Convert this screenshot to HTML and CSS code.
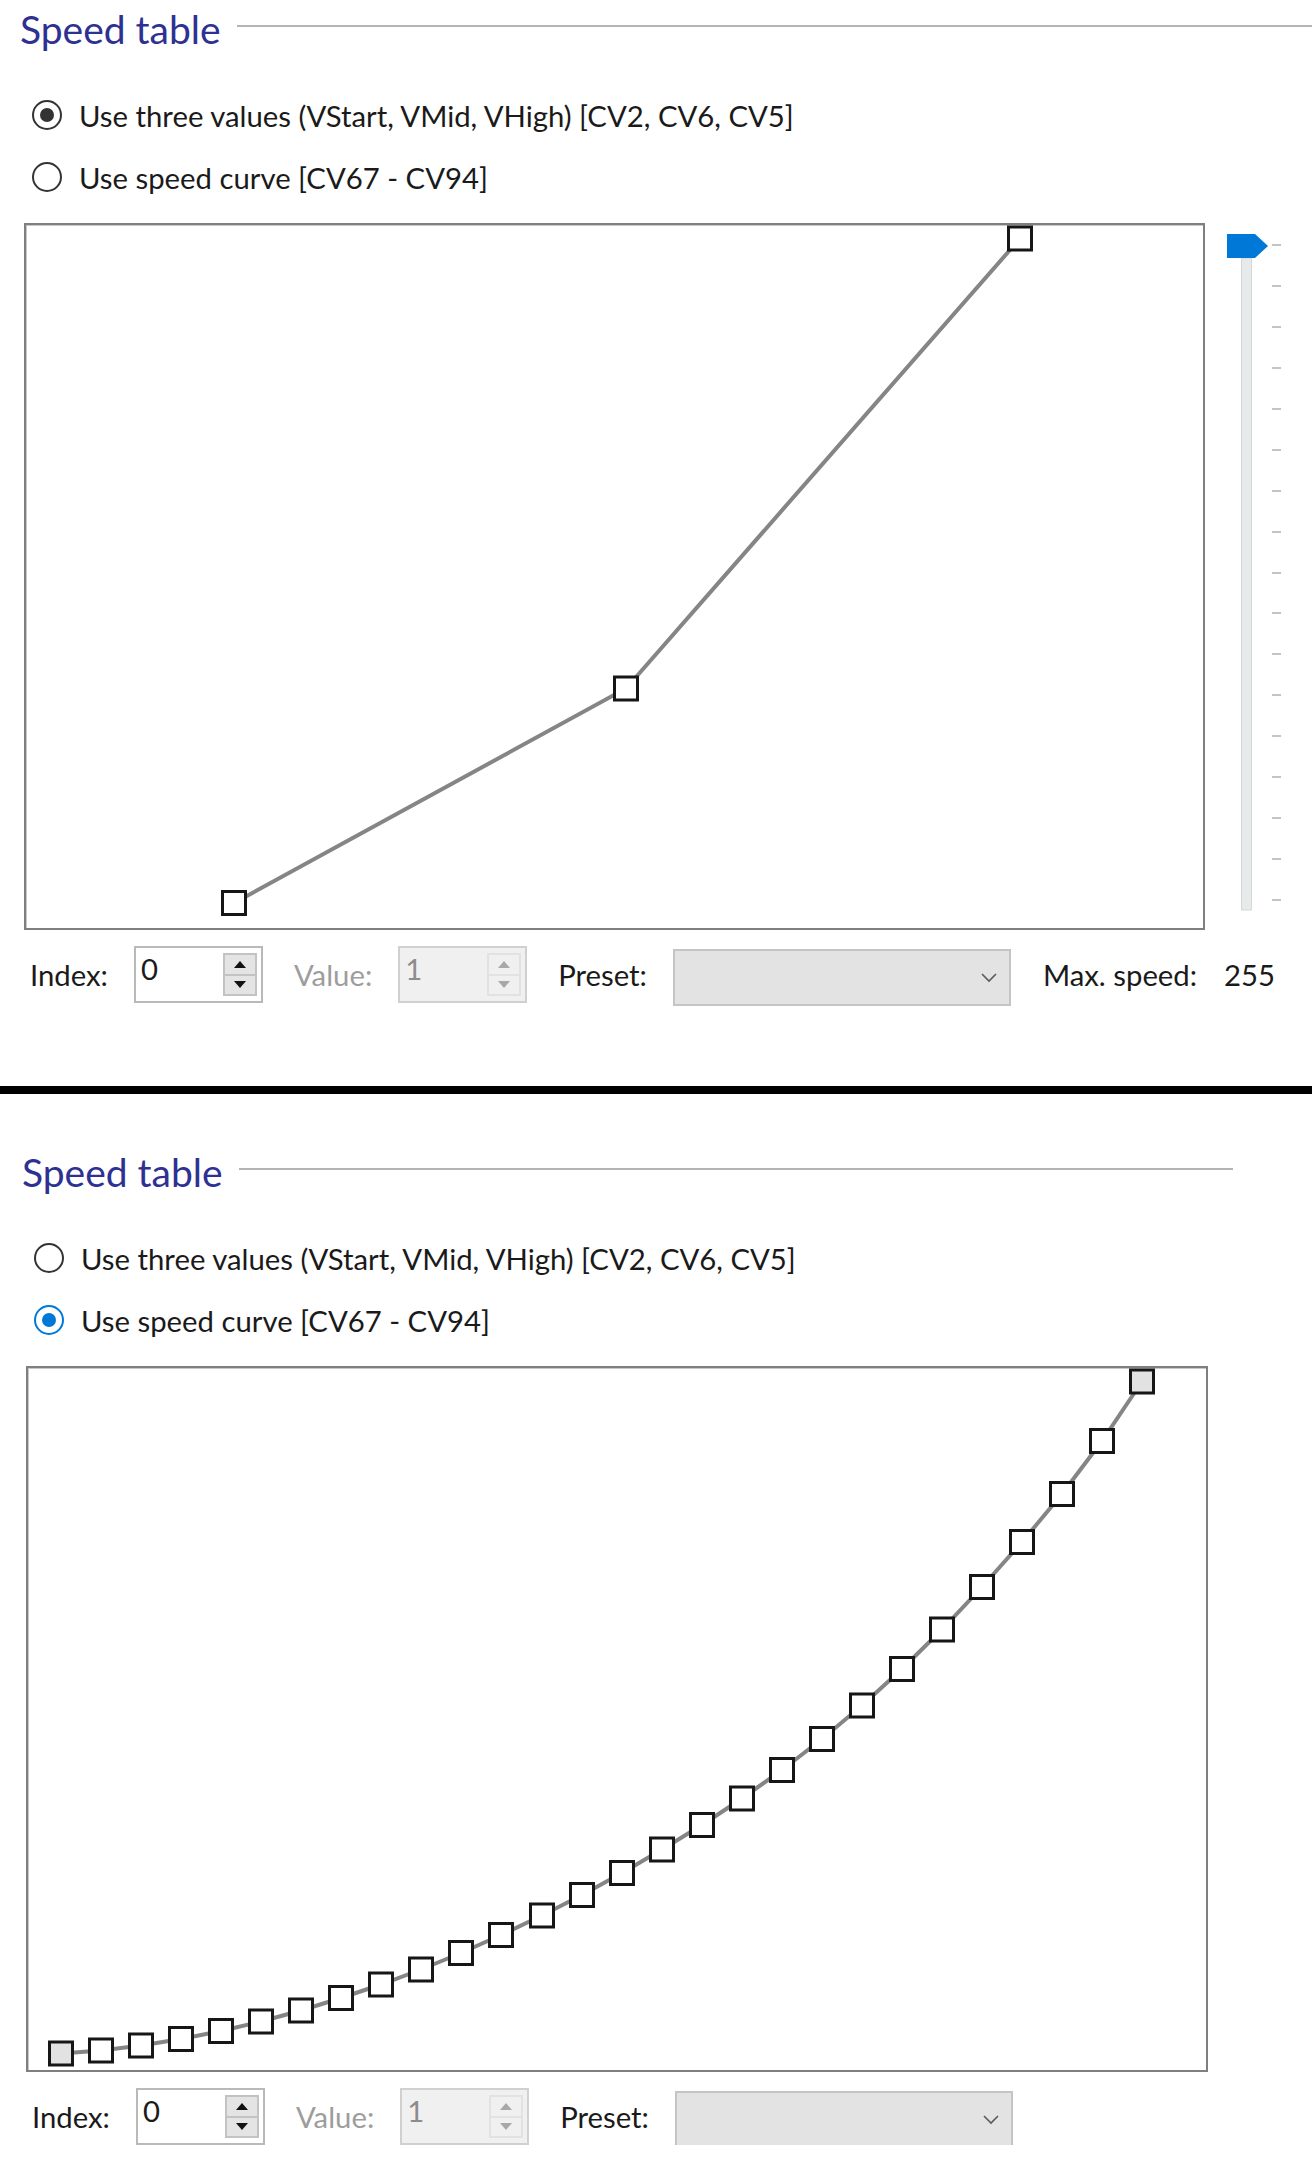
FILE: index.html
```html
<!DOCTYPE html>
<html lang="en">
<head>
  <meta charset="UTF-8" />
  <title>Speed table</title>
  <link rel="stylesheet" href="styles.css">
</head>
<body>

  <div class="panel">
    <div class="group-head">
      <span class="group-title">Speed table</span>
      <span class="group-rule"></span>
    </div>

    <div class="options">
      <label class="radio"><span class="radio-mark checked"></span>Use three values (VStart, VMid, VHigh) [CV2, CV6, CV5]</label>
      <label class="radio"><span class="radio-mark"></span>Use speed curve [CV67 - CV94]</label>
    </div>

    <div class="chart-row">
      <div class="chart">
        <svg viewBox="0 0 1177 703">
          <polyline class="curve" points="208,678 600,463.5 994,13.5" />
          <g class="pts">
            <rect x="196.5" y="666.5" width="23" height="23" />
            <rect x="588.5" y="452" width="23" height="23" />
            <rect x="982.5" y="2" width="23" height="23" />
          </g>
        </svg>
      </div>

      <div class="slider">
        <svg viewBox="0 0 60 707" width="60" height="707">
          <rect class="track" x="16.5" y="35" width="10" height="652" />
          <path class="thumb" d="M2 11 H30 L43 23 L30 35 H2 Z" />
          <g class="ticks">
            <line x1="47" x2="56" y1="22" y2="22" />
            <line x1="47" x2="56" y1="63" y2="63" />
            <line x1="47" x2="56" y1="104" y2="104" />
            <line x1="47" x2="56" y1="145" y2="145" />
            <line x1="47" x2="56" y1="186" y2="186" />
            <line x1="47" x2="56" y1="227" y2="227" />
            <line x1="47" x2="56" y1="268" y2="268" />
            <line x1="47" x2="56" y1="309" y2="309" />
            <line x1="47" x2="56" y1="350" y2="350" />
            <line x1="47" x2="56" y1="390" y2="390" />
            <line x1="47" x2="56" y1="431" y2="431" />
            <line x1="47" x2="56" y1="472" y2="472" />
            <line x1="47" x2="56" y1="513" y2="513" />
            <line x1="47" x2="56" y1="554" y2="554" />
            <line x1="47" x2="56" y1="595" y2="595" />
            <line x1="47" x2="56" y1="636" y2="636" />
            <line x1="47" x2="56" y1="677" y2="677" />
          </g>
        </svg>
      </div>
    </div>

    <div class="controls">
      <span class="field-label">Index:</span>
      <div class="spin">
        <span class="spin-value">0</span>
        <span class="spin-buttons">
          <span class="spin-btn"><span class="arrow-up"></span></span>
          <span class="spin-btn"><span class="arrow-down"></span></span>
        </span>
      </div>

      <span class="field-label muted">Value:</span>
      <div class="spin disabled">
        <span class="spin-value">1</span>
        <span class="spin-buttons">
          <span class="spin-btn"><span class="arrow-up"></span></span>
          <span class="spin-btn"><span class="arrow-down"></span></span>
        </span>
      </div>

      <span class="field-label">Preset:</span>
      <div class="combo">
        <svg class="chevron" viewBox="0 0 16 10" width="16" height="10"><polyline points="1,1 8,8 15,1" /></svg>
      </div>

      <span class="field-label">Max. speed:</span>
      <span class="max-value">255</span>
    </div>
  </div>

  <div class="divider"></div>

  <div class="panel panel-alt">
    <div class="group-head">
      <span class="group-title">Speed table</span>
      <span class="group-rule"></span>
    </div>

    <div class="options">
      <label class="radio"><span class="radio-mark"></span>Use three values (VStart, VMid, VHigh) [CV2, CV6, CV5]</label>
      <label class="radio"><span class="radio-mark checked accent"></span>Use speed curve [CV67 - CV94]</label>
    </div>

    <div class="chart-row">
      <div class="chart">
        <svg viewBox="0 0 1178 702">
          <polyline class="curve" points="33,685.5 73,682.5 113,677.5 153,671 193,663 233,653.5 273,642.5 313,630 353,616.5 393,601.5 433,585 473,567 514,547.5 554,527 594,505 634,481.5 674,457 714,430.5 754,402 794,371 834,337.5 874,301 914,261.5 954,219 994,174 1034,126 1074,73 1114,13.5" />
          <g class="pts">
            <rect class="pt-end" x="21.5" y="674" width="23" height="23" />
            <rect x="61.5" y="671" width="23" height="23" />
            <rect x="101.5" y="666" width="23" height="23" />
            <rect x="141.5" y="659.5" width="23" height="23" />
            <rect x="181.5" y="651.5" width="23" height="23" />
            <rect x="221.5" y="642" width="23" height="23" />
            <rect x="261.5" y="631" width="23" height="23" />
            <rect x="301.5" y="618.5" width="23" height="23" />
            <rect x="341.5" y="605" width="23" height="23" />
            <rect x="381.5" y="590" width="23" height="23" />
            <rect x="421.5" y="573.5" width="23" height="23" />
            <rect x="461.5" y="555.5" width="23" height="23" />
            <rect x="502.5" y="536" width="23" height="23" />
            <rect x="542.5" y="515.5" width="23" height="23" />
            <rect x="582.5" y="493.5" width="23" height="23" />
            <rect x="622.5" y="470" width="23" height="23" />
            <rect x="662.5" y="445.5" width="23" height="23" />
            <rect x="702.5" y="419" width="23" height="23" />
            <rect x="742.5" y="390.5" width="23" height="23" />
            <rect x="782.5" y="359.5" width="23" height="23" />
            <rect x="822.5" y="326" width="23" height="23" />
            <rect x="862.5" y="289.5" width="23" height="23" />
            <rect x="902.5" y="250" width="23" height="23" />
            <rect x="942.5" y="207.5" width="23" height="23" />
            <rect x="982.5" y="162.5" width="23" height="23" />
            <rect x="1022.5" y="114.5" width="23" height="23" />
            <rect x="1062.5" y="61.5" width="23" height="23" />
            <rect class="pt-end" x="1102.5" y="2" width="23" height="23" />
          </g>
        </svg>
      </div>
    </div>

    <div class="controls">
      <span class="field-label">Index:</span>
      <div class="spin">
        <span class="spin-value">0</span>
        <span class="spin-buttons">
          <span class="spin-btn"><span class="arrow-up"></span></span>
          <span class="spin-btn"><span class="arrow-down"></span></span>
        </span>
      </div>

      <span class="field-label muted">Value:</span>
      <div class="spin disabled">
        <span class="spin-value">1</span>
        <span class="spin-buttons">
          <span class="spin-btn"><span class="arrow-up"></span></span>
          <span class="spin-btn"><span class="arrow-down"></span></span>
        </span>
      </div>

      <span class="field-label">Preset:</span>
      <div class="combo">
        <svg class="chevron" viewBox="0 0 16 10" width="16" height="10"><polyline points="1,1 8,8 15,1" /></svg>
      </div>
    </div>
  </div>

</body>
</html>
```

FILE: styles.css
```css
* {
  box-sizing: border-box;
}

body {
  margin: 0;
  background: #ffffff;
  color: #1a1a1a;
  font-family: Lato, "Noto Sans", sans-serif;
  font-size: 29.3px;
}

.panel {
  padding-left: 24px;
}

.panel-alt {
  padding-left: 26px;
  padding-right: 79px;
}

/* group box header */
.group-head {
  display: flex;
  align-items: center;
  height: 58px;
  margin-left: -4px;
}

.group-title {
  font-size: 39px;
  line-height: 58px;
  color: #2e3192;
}

.group-rule {
  flex: 1;
  height: 2px;
  margin-left: 16px;
  margin-top: -6px;
  background: #b4b4b4;
}

/* radio buttons */
.options {
  margin-top: 26px;
  margin-left: 8px;
}

.radio {
  display: flex;
  align-items: center;
  height: 62px;
}

.radio-mark {
  display: flex;
  align-items: center;
  justify-content: center;
  width: 30px;
  height: 30px;
  margin-right: 17px;
  border: 2px solid #333333;
  border-radius: 50%;
  background: #ffffff;
}

.radio-mark.checked::after {
  content: "";
  width: 14px;
  height: 14px;
  border-radius: 50%;
  background: #333333;
}

.radio-mark.accent {
  border-color: #0078d7;
}

.radio-mark.accent::after {
  background: #0078d7;
}

/* chart */
.chart-row {
  display: flex;
  margin-top: 15px;
}

.chart {
  width: 1181px;
  height: 707px;
  border: 2px solid #7f7f7f;
  box-shadow: inset 1px 1px 0 #c8c8c8;
  background: #ffffff;
}

.panel-alt .chart {
  width: 1182px;
  height: 706px;
}

.chart svg {
  display: block;
  width: 100%;
  height: 100%;
}

.curve {
  fill: none;
  stroke: #858585;
  stroke-width: 4;
}

.pts rect {
  fill: #ffffff;
  stroke: #161616;
  stroke-width: 3;
}

.pts rect.pt-end {
  fill: #e2e2e2;
}

/* vertical slider */
.slider {
  width: 60px;
  margin-left: 20px;
}

.slider svg {
  display: block;
}

.track {
  fill: #e7eaea;
  stroke: #d6d6d6;
  stroke-width: 1;
}

.thumb {
  fill: #0078d7;
}

.ticks line {
  stroke: #c4c4c4;
  stroke-width: 2;
}

/* controls under the chart */
.controls {
  display: flex;
  align-items: center;
  height: 57px;
  margin-top: 16px;
  margin-left: 6px;
}

.field-label {
  margin-right: 26px;
}

.field-label.muted {
  color: #9d9d9d;
}

.spin {
  display: flex;
  width: 129px;
  height: 57px;
  margin-right: 31px;
  border: 2px solid #b9b9b9;
  background: #ffffff;
}

.spin-value {
  flex: 1;
  padding: 6px 0 0 5px;
  line-height: 1;
}

.spin-buttons {
  display: flex;
  flex-direction: column;
  width: 34px;
  margin: 5px 4px 5px 0;
}

.spin-btn {
  display: flex;
  flex: 1;
  align-items: center;
  justify-content: center;
  border: 2px solid #c3c3c3;
  background: #e4e4e4;
}

.spin-btn + .spin-btn {
  border-top: none;
}

.arrow-up {
  border-left: 6px solid transparent;
  border-right: 6px solid transparent;
  border-bottom: 7px solid #111111;
}

.arrow-down {
  border-left: 6px solid transparent;
  border-right: 6px solid transparent;
  border-top: 7px solid #111111;
}

.spin.disabled {
  border-color: #d0d0d0;
  background: #f0f0f0;
}

.spin.disabled .spin-value {
  color: #8c8c8c;
}

.spin.disabled .spin-btn {
  border-color: #e2e2e2;
  background: #f0f0f0;
}

.spin.disabled .arrow-up {
  border-bottom-color: #a8a8a8;
}

.spin.disabled .arrow-down {
  border-top-color: #a8a8a8;
}

.combo {
  display: flex;
  align-items: center;
  justify-content: flex-end;
  width: 338px;
  height: 57px;
  margin-top: 6px;
  margin-right: 32px;
  padding-right: 12px;
  border: 2px solid #c5c5c5;
  background: #e3e3e3;
}

.chevron polyline {
  fill: none;
  stroke: #5a5a5a;
  stroke-width: 1.6;
}

.max-value {
  margin-left: 1px;
}

.divider {
  height: 8px;
  margin: 83px 0 49px;
  background: #000000;
}
```
